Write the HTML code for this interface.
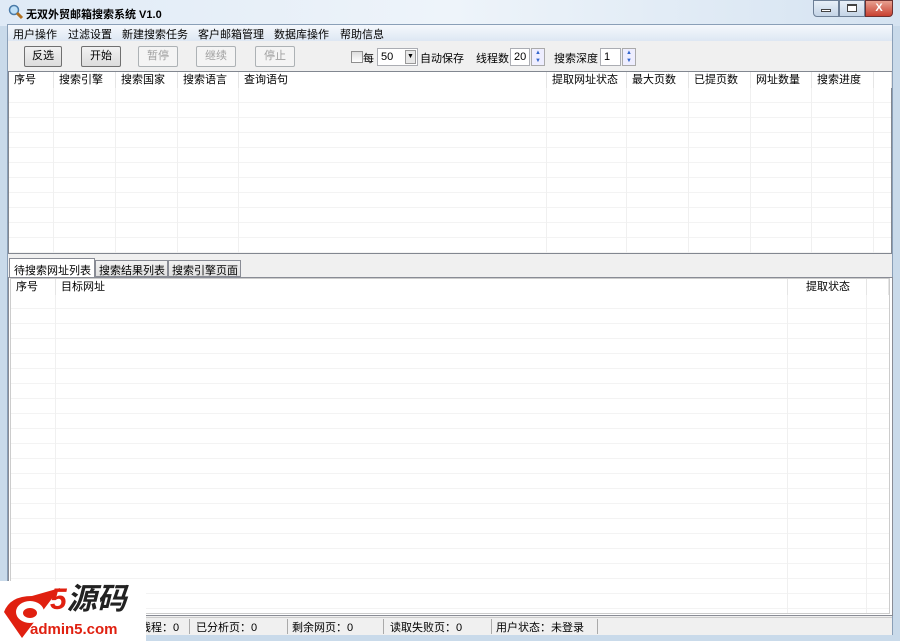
<!DOCTYPE html><html><head><meta charset="utf-8"><style>
*{margin:0;padding:0;box-sizing:border-box}
body{width:900px;height:641px;overflow:hidden;font-family:"Liberation Sans","Noto Sans CJK SC",sans-serif;font-size:11px;color:#000;background:#c9daea;position:relative}
.a{position:absolute;white-space:nowrap}
.title{left:0;top:0;width:900px;height:26px;background:linear-gradient(90deg,#dfeaf6,#eef4fa 50%,#d5e3f1)}
.frame{left:7px;top:24px;width:886px;height:611px;background:#f0f0f0;border:1px solid #8a9fb7}
.menu{left:8px;top:25px;width:884px;height:16px;background:linear-gradient(#f5f8fc,#dde7f3)}
.btn{height:21px;border:1px solid #707070;border-radius:2px;background:linear-gradient(#f2f2f2,#dcdcdc);text-align:center;line-height:19px}
.dis{border-color:#adb2b5;color:#a0a0a0;background:#f4f4f4}
.inp{background:#fff;border:1px solid #abadb3;height:18px;line-height:16px;padding-left:3px}
.list{background:#fff;border:1px solid #828790}
.hd{position:absolute;top:0;height:16px;line-height:16px;padding-left:5px;border-right:1px solid #e5e5e5;background:#fff;overflow:hidden}
.vl{position:absolute;width:1px;background:#f0f0f0}
</style></head><body>
<div class="a title"></div>
<svg class="a" style="left:8px;top:4px" width="16" height="16"><circle cx="6" cy="6" r="4.5" fill="#bfe0f8" stroke="#4a7aa8" stroke-width="1.5"/><line x1="9" y1="9" x2="14" y2="14" stroke="#b07020" stroke-width="3"/></svg>
<div class="a" style="left:26px;top:6px;font-weight:bold;font-size:11px">无双外贸邮箱搜索系统 V1.0</div>
<div class="a" style="left:813px;top:0;width:26px;height:17px;border:1px solid #6d7f96;border-radius:0 0 0 4px;background:linear-gradient(#e8f0f8,#c4d4e6)"></div>
<div class="a" style="left:821px;top:9px;width:10px;height:3px;background:#fff;border:1px solid #444"></div>
<div class="a" style="left:839px;top:0;width:26px;height:17px;border:1px solid #6d7f96;background:linear-gradient(#e8f0f8,#c4d4e6)"></div>
<div class="a" style="left:847px;top:4px;width:10px;height:8px;border:1px solid #444;border-top-width:2px;background:#fff"></div>
<div class="a" style="left:865px;top:0;width:28px;height:17px;border:1px solid #6d3030;border-radius:0 0 4px 0;background:linear-gradient(#e8a090,#c84030);color:#fff;font-weight:bold;text-align:center;line-height:15px">X</div>
<div class="a frame"></div>
<div class="a menu"></div>
<div class="a" style="left:13px;top:26px">用户操作</div>
<div class="a" style="left:68px;top:26px">过滤设置</div>
<div class="a" style="left:122px;top:26px">新建搜索任务</div>
<div class="a" style="left:198px;top:26px">客户邮箱管理</div>
<div class="a" style="left:274px;top:26px">数据库操作</div>
<div class="a" style="left:340px;top:26px">帮助信息</div>
<div class="a btn" style="left:24px;top:46px;width:38px">反选</div>
<div class="a btn" style="left:81px;top:46px;width:40px">开始</div>
<div class="a btn dis" style="left:138px;top:46px;width:40px">暂停</div>
<div class="a btn dis" style="left:196px;top:46px;width:40px">继续</div>
<div class="a btn dis" style="left:255px;top:46px;width:40px">停止</div>
<div class="a" style="left:351px;top:51px;width:12px;height:12px;border:1px solid #8f8f8f;background:linear-gradient(#ddd,#fff)"></div>
<div class="a" style="left:363px;top:50px">每</div>
<div class="a inp" style="left:377px;top:48px;width:41px">50</div>
<div class="a" style="left:405px;top:50px;width:11px;height:14px;border:1px solid #999;background:#e8e8e8;font-size:7px;text-align:center;line-height:12px">▼</div>
<div class="a" style="left:420px;top:50px">自动保存</div>
<div class="a" style="left:476px;top:50px">线程数</div>
<div class="a inp" style="left:510px;top:48px;width:20px">20</div>
<div class="a" style="left:531px;top:48px;width:14px;height:18px;border:1px solid #aaa;background:#eef;font-size:6px;color:#36c;text-align:center;line-height:8px">▲<br>▼</div>
<div class="a" style="left:554px;top:50px">搜索深度</div>
<div class="a inp" style="left:600px;top:48px;width:21px">1</div>
<div class="a" style="left:622px;top:48px;width:14px;height:18px;border:1px solid #aaa;background:#eef;font-size:6px;color:#36c;text-align:center;line-height:8px">▲<br>▼</div>

<div class="a list" style="left:8px;top:71px;width:884px;height:183px;background:repeating-linear-gradient(#fff 0 14px,#f3f3f3 14px 15px);background-position:0 1px">
<div class="hd" style="left:0;width:45px">序号</div><div class="hd" style="left:45px;width:62px">搜索引擎</div><div class="hd" style="left:107px;width:62px">搜索国家</div><div class="hd" style="left:169px;width:61px">搜索语言</div><div class="hd" style="left:230px;width:308px">查询语句</div><div class="hd" style="left:538px;width:80px">提取网址状态</div><div class="hd" style="left:618px;width:62px">最大页数</div><div class="hd" style="left:680px;width:62px">已提页数</div><div class="hd" style="left:742px;width:61px">网址数量</div><div class="hd" style="left:803px;width:62px">搜索进度</div><div class="hd" style="left:865px;width:18px"></div>
<div class="vl" style="left:44px;top:16px;height:165px"></div><div class="vl" style="left:106px;top:16px;height:165px"></div><div class="vl" style="left:168px;top:16px;height:165px"></div><div class="vl" style="left:229px;top:16px;height:165px"></div><div class="vl" style="left:537px;top:16px;height:165px"></div><div class="vl" style="left:617px;top:16px;height:165px"></div><div class="vl" style="left:679px;top:16px;height:165px"></div><div class="vl" style="left:741px;top:16px;height:165px"></div><div class="vl" style="left:802px;top:16px;height:165px"></div><div class="vl" style="left:864px;top:16px;height:165px"></div>
</div>

<div class="a" style="left:9px;top:258px;width:86px;height:20px;background:#fff;border:1px solid #898c95;border-bottom:none;padding:3px 0 0 4px">待搜索网址列表</div>
<div class="a" style="left:95px;top:260px;width:73px;height:17px;background:linear-gradient(#f2f2f2,#e0e0e0);border:1px solid #898c95;padding:1px 0 0 3px">搜索结果列表</div>
<div class="a" style="left:168px;top:260px;width:73px;height:17px;background:linear-gradient(#f2f2f2,#e0e0e0);border:1px solid #898c95;padding:1px 0 0 3px">搜索引擎页面</div>
<div class="a" style="left:8px;top:277px;width:885px;height:339px;background:#fff;border:1px solid #898c95"></div>
<div class="a list" style="left:10px;top:278px;width:880px;height:336px;background:repeating-linear-gradient(#fff 0 14px,#f3f3f3 14px 15px);border-color:#ccc">
<div class="hd" style="left:0;width:45px">序号</div><div class="hd" style="left:45px;width:732px">目标网址</div><div class="hd" style="left:777px;width:79px;padding-left:18px">提取状态</div><div class="hd" style="left:856px;width:22px"></div>
<div class="vl" style="left:44px;top:16px;height:318px"></div><div class="vl" style="left:776px;top:16px;height:318px"></div><div class="vl" style="left:855px;top:16px;height:318px"></div>
</div>

<div class="a" style="left:8px;top:617px;width:884px;height:18px;background:#f0f0f0;border-top:1px solid #ccc"></div>
<div class="a" style="left:140px;top:619px;width:50px;height:15px;border-right:1px solid #aaa">线程：0</div>
<div class="a" style="left:196px;top:619px;width:92px;height:15px;border-right:1px solid #aaa">已分析页：0</div>
<div class="a" style="left:292px;top:619px;width:92px;height:15px;border-right:1px solid #aaa">剩余网页：0</div>
<div class="a" style="left:390px;top:619px;width:102px;height:15px;border-right:1px solid #aaa">读取失败页：0</div>
<div class="a" style="left:496px;top:619px;width:102px;height:15px;border-right:1px solid #aaa">用户状态：未登录</div>

<div class="a" style="left:0;top:581px;width:146px;height:60px;background:#fff"></div>
<svg class="a" style="left:2px;top:582px" width="60" height="58"><path d="M2 30 L20 56 L58 6 L30 14 Q8 14 2 30Z" fill="#e02010"/><ellipse cx="28" cy="30" rx="14" ry="11" fill="#fff"/><ellipse cx="28" cy="31" rx="7" ry="5" fill="#e02010"/></svg>
<div class="a" style="left:50px;top:584px;font-size:30px;font-weight:bold;color:#222;font-style:italic;line-height:32px"><span style="color:#e02010">5</span>源码</div>
<div class="a" style="left:30px;top:622px;font-size:15px;font-weight:bold;color:#e02010;line-height:16px">admin5.com</div>
</body></html>
